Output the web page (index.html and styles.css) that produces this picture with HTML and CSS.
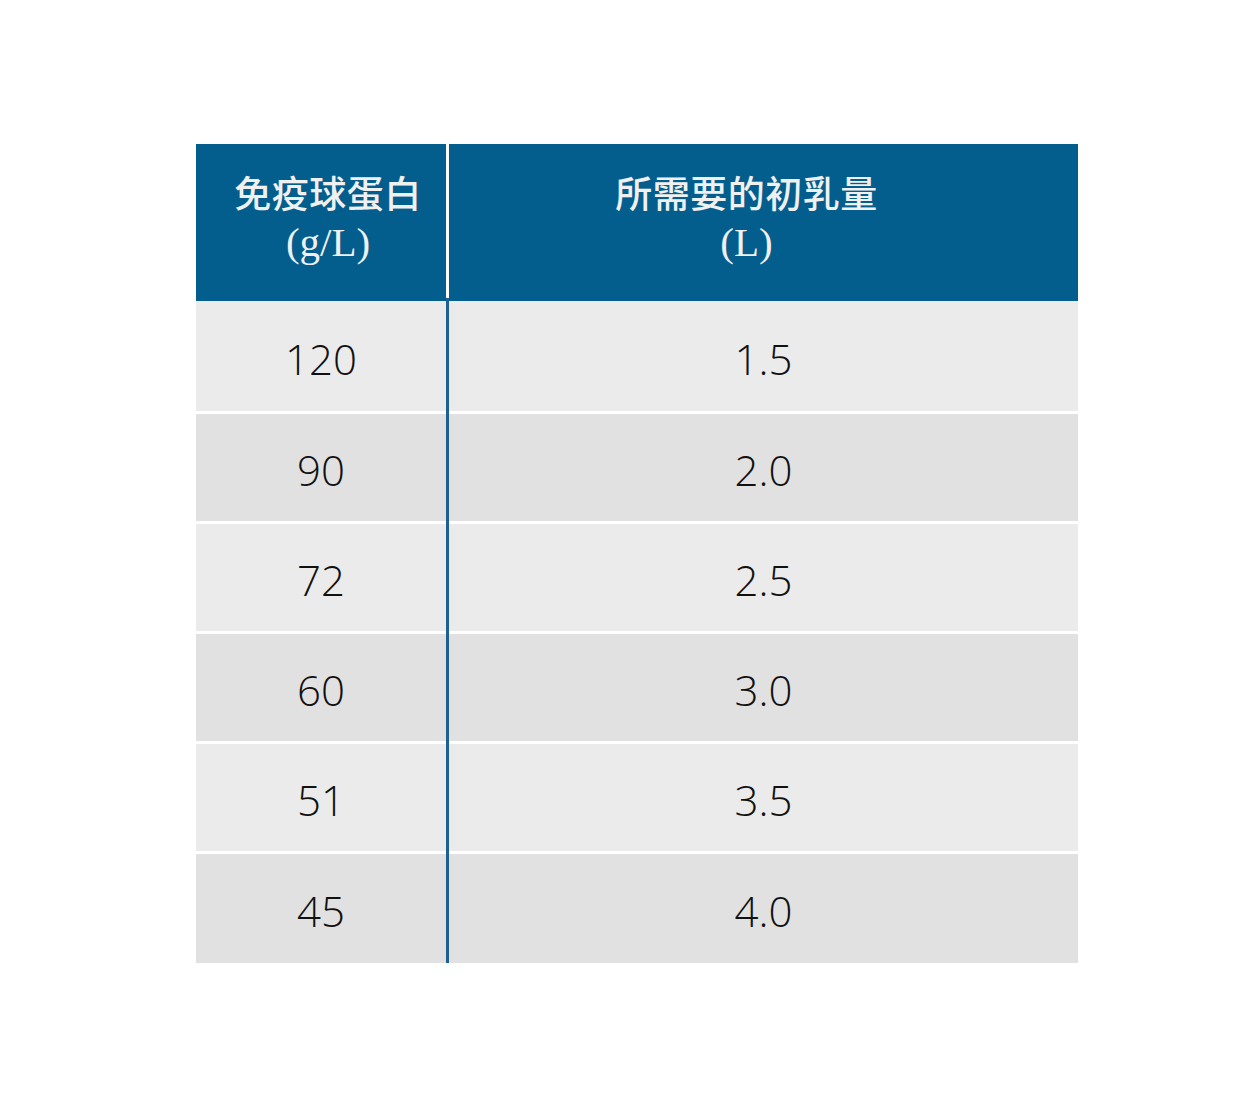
FILE: index.html
```html
<!DOCTYPE html>
<html lang="zh-Hant">
<head>
<meta charset="utf-8">
<title>免疫球蛋白與初乳量</title>
<link rel="stylesheet" href="styles.css">
</head>
<body>
<div class="page">
  <div class="table">
    <div class="head">
      <div class="hcell c1"><span class="cjk">免疫球蛋白</span><span class="unit">(g/L)</span></div>
      <div class="hsep"></div>
      <div class="hcell c2"><span class="cjk">所需要的初乳量</span><span class="unit">(L)</span></div>
    </div>
    <div class="row odd"><div class="cell c1">120</div><div class="vsep"></div><div class="cell c2">1.5</div></div>
    <div class="row even"><div class="cell c1">90</div><div class="vsep"></div><div class="cell c2">2.0</div></div>
    <div class="row odd"><div class="cell c1">72</div><div class="vsep"></div><div class="cell c2">2.5</div></div>
    <div class="row even"><div class="cell c1">60</div><div class="vsep"></div><div class="cell c2">3.0</div></div>
    <div class="row odd"><div class="cell c1">51</div><div class="vsep"></div><div class="cell c2">3.5</div></div>
    <div class="row even last"><div class="cell c1">45</div><div class="vsep"></div><div class="cell c2">4.0</div></div>
  </div>
</div>
</body>
</html>
```
FILE: styles.css
```css
html, body {
  margin: 0;
  padding: 0;
  background: #ffffff;
}
.page {
  width: 1260px;
  height: 1102px;
  padding-top: 144px;
  padding-left: 196px;
  box-sizing: border-box;
}
.table {
  width: 882px;
  display: flex;
  flex-direction: column;
}
.head {
  display: flex;
  height: 157px;
  background: #035e8d;
}
.hcell {
  display: flex;
  flex-direction: column;
  align-items: center;
  justify-content: center;
  color: #f0f0f0;
  padding-bottom: 12px;
  box-sizing: border-box;
}
.hcell.c1 { width: 250px; padding-left: 14px; }
.hcell.c2 { flex: 1; padding-right: 34px; }
.hsep {
  width: 3px;
  background: #ffffff;
}
.cjk {
  font-family: "Noto Sans CJK TC", "Noto Sans CJK SC", sans-serif;
  font-size: 37px;
  font-weight: 500;
  line-height: 50px;
  letter-spacing: 0.5px;
}
.unit {
  font-family: "Liberation Serif", "Noto Sans CJK TC", serif;
  font-size: 41px;
  line-height: 50px;
}
.row {
  display: flex;
  height: 107px;
  border-top: 3px solid #ffffff;
}
.head + .row { border-top: 0; height: 110px; }
.row.odd { background: #ebebeb; }
.row.even { background: #e1e1e1; }
.row.last { height: 109px; }
.cell {
  display: flex;
  align-items: center;
  justify-content: center;
  padding-top: 4px;
  box-sizing: border-box;
  font-family: "Open Sans", "Noto Sans", sans-serif;
  font-size: 42px;
  font-weight: 350;
  color: #111111;
}
.cell.c1 { width: 250px; }
.cell.c2 { flex: 1; }
.vsep {
  width: 3px;
  display: flex;
  justify-content: center;
}
.vsep::before {
  content: "";
  width: 3px;
  margin-top: -3px;
  background: #1f5f92;
}
```
